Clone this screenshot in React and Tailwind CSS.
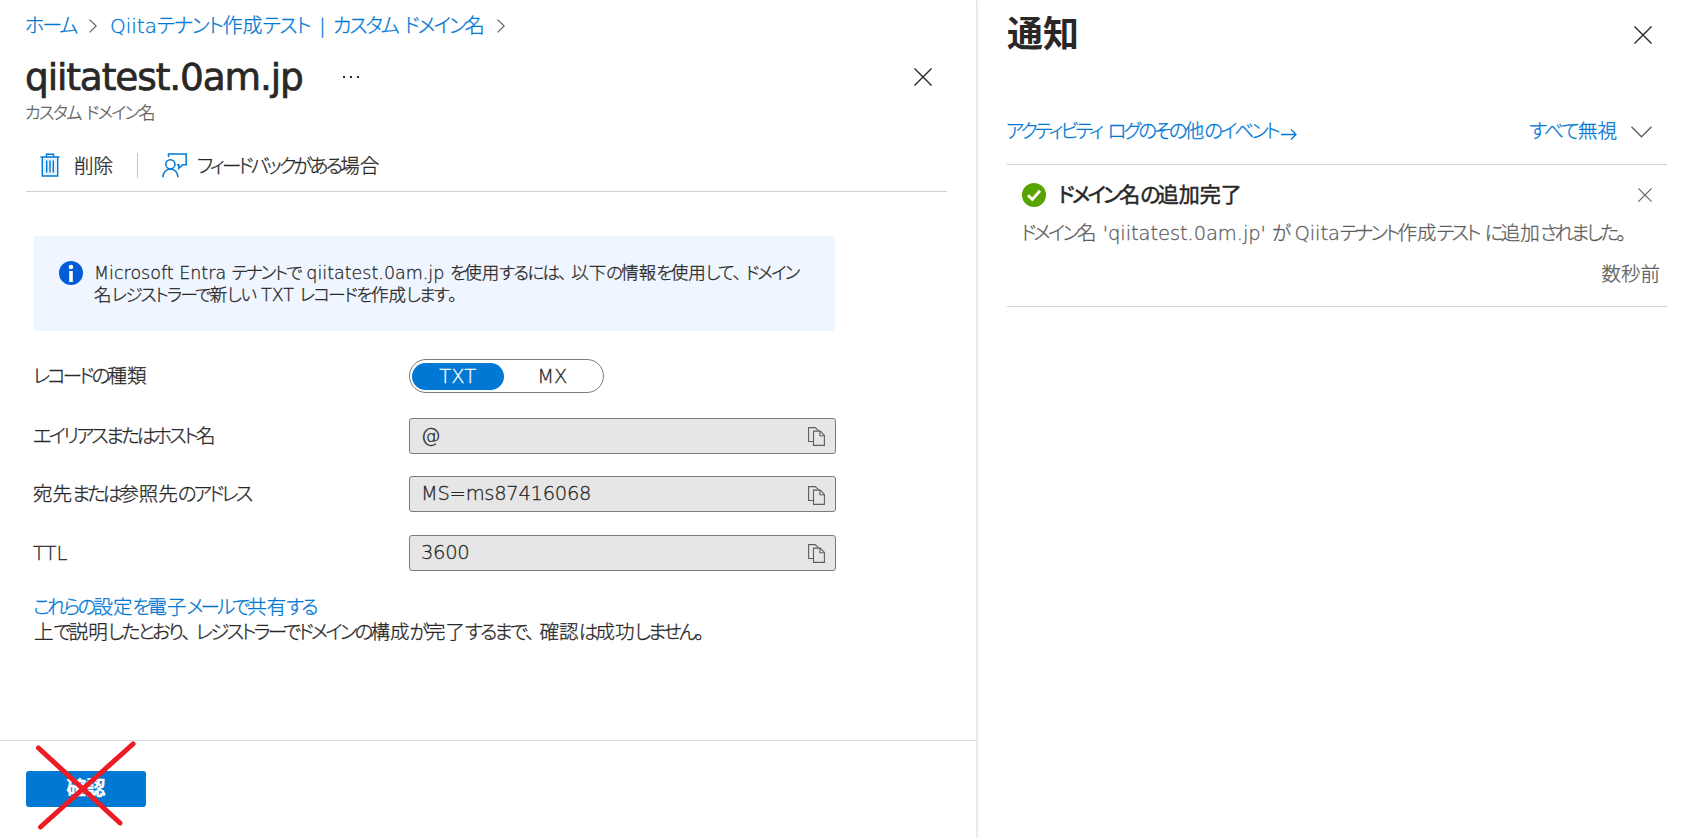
import React from 'react';

// Kana are set tighter than kanji, latin runs use a wide humanist face
const RUNS = /([\u3040-\u30ff]+|[\u0020-\u007e]+|\u3001)/;

function Jp({ children, className = '', kana = 'tracking-[-0.15em]', latin = '' }) {
  return (
    <span className={`whitespace-nowrap ${className}`}>
      {children.split(RUNS).filter(Boolean).map((run, i) => {
        if (/^[\u3040-\u30ff]/.test(run)) return <span key={i} className={kana}>{run}</span>;
        if (/^[\u0020-\u007e]/.test(run)) return <span key={i} className={latin}>{run}</span>;
        if (run === '、') return <span key={i} className="tracking-[0.24em]">{run}</span>;
        return run;
      })}
    </span>
  );
}

function Close({ size = 18, className = '' }) {
  return (
    <svg width={size} height={size} viewBox="0 0 18 18" fill="none" stroke="currentColor" strokeWidth="1.4" className={className}>
      <path d="M.5.5l17 17M17.5.5l-17 17" />
    </svg>
  );
}

function Crumb() {
  return (
    <svg width="8" height="14" viewBox="0 0 8 14" fill="none" stroke="#605e5c" strokeWidth="1.2">
      <path d="M.6.6L7.2 7 .6 13.4" />
    </svg>
  );
}

function Trash() {
  return (
    <svg width="20" height="24" viewBox="0 0 20 24" fill="none" stroke="#0078d4" strokeWidth="1.4">
      <path d="M2.300 4h15.400v19H2.300z" fill="#e3f1fb" stroke="none" />
      <path d="M.5 4h19M6.500 4V1.200h7V4M2.300 4v19h15.400V4" />
      <path d="M6.700 7.500v12M10 7.500v12M13.300 7.500v12" />
    </svg>
  );
}

function Feedback() {
  return (
    <svg width="25" height="25" viewBox="0 0 25 25" fill="none" stroke="#0078d4" strokeWidth="1.5">
      <path d="M6.500 4V1h17.700v10.700h-3.400l-4 3.600v-3.600h-2" />
      <circle cx="8.400" cy="11.300" r="4.600" />
      <path d="M.8 24.200c.3-4.800 3.400-8.300 7.600-8.300s7.300 3.500 7.600 8.300" />
    </svg>
  );
}

function Copy() {
  return (
    <svg width="17" height="19" viewBox="0 0 17 19" fill="none" stroke="#605e5c" strokeWidth="1.1" className="mt-[2px]">
      <path d="M5 14.500H.6V.6h6.600l3.300 3" />
      <path d="M5.500 4.100h6.800l4.100 4.300v10H5.500z" />
      <path d="M11.900 4.200v4.500h4.400" />
    </svg>
  );
}

function Row({ label, children }) {
  return (
    <div className="flex items-center h-9">
      <div className="w-[376px] -ml-px pt-[2px]"><Jp>{label}</Jp></div>
      {children}
    </div>
  );
}

function Field({ value }) {
  return (
    <div className="flex items-center justify-between w-[427px] h-9 pl-[11px] pr-[10px] bg-[#e6e6e6] border border-[#7d7b79] rounded-[3px]">
      <span className="tracking-[-0.015em]">{value}</span>
      <Copy />
    </div>
  );
}

export default function App() {
  return (
    <div lang="ja" className="flex w-[1684px] h-[838px] overflow-hidden bg-white text-[#292827] text-[19.5px] leading-6 font-light [-webkit-text-stroke:0.3px_currentColor] font-['DejaVu_Sans','Noto_Sans_CJK_JP',sans-serif] [font-feature-settings:'palt']">
      {/* Domain blade */}
      <main className="flex flex-col w-[977px] shrink-0 border-r border-[#e4e4e4] shadow-[0_0_4px_rgba(0,0,0,0.12)]">
        <nav className="flex items-center h-6 mt-[14px] pl-[25px] text-[20px] text-[#0078d4]">
          <Jp className="w-[64px]" kana="tracking-[-0.1em]">ホーム</Jp>
          <Crumb />
          <Jp className="w-[209px] ml-[13px]" kana="tracking-[-0.06em]">Qiitaテナント作成テスト</Jp>
          <span className="w-[14px]">|</span>
          <Jp className="w-[164px]" kana="tracking-[-0.1em]">カスタム ドメイン名</Jp>
          <Crumb />
        </nav>

        <header className="flex items-center h-12 mt-[15px] pl-[25px] pr-[44px]">
          <h1 className="w-[317px] text-[37.5px] font-normal tracking-[-0.03em] [-webkit-text-stroke:0.7px_#292827]">qiitatest.0am.jp</h1>
          <svg width="18" height="3" viewBox="0 0 18 3" fill="#292827">
            <path d="M1 0h2v2H1zM8 0h2v2H8zM15 0h2v2h-2z" />
          </svg>
          <Close className="ml-auto" />
        </header>
        <div className="h-6 pl-[25px] text-[17px] text-[#605e5c]"><Jp kana="tracking-[-0.09em]">カスタム ドメイン名</Jp></div>

        <div className="flex items-center h-[53px] mt-[14px] ml-[26px] mr-[29px] pl-[14px] border-b border-[#d2d0ce]">
          <Trash />
          <Jp className="w-[63px] ml-[14px] pt-[3px]">削除</Jp>
          <div className="w-px h-[25px] mr-[24px] bg-[#c8c6c4]" />
          <Feedback />
          <Jp className="ml-[10px] pt-[3px]">フィードバックがある場合</Jp>
        </div>

        <section className="pl-[34px]">
          <div className="flex w-[801px] h-[95px] mt-[44px] pl-[25px] pt-[25px] bg-[#eff6ff] rounded-[3px] text-[17.5px] leading-[22px]">
            <svg width="24" height="24" viewBox="0 0 24 24" className="shrink-0">
              <circle cx="12" cy="12" r="12" fill="#015cda" />
              <circle cx="12" cy="6" r="2.300" fill="#fff" />
              <path d="M10.200 10h3.600v11h-3.600z" fill="#fff" />
            </svg>
            <p className="ml-[11px] pt-px">
              <Jp kana="tracking-[-0.1em]">Microsoft Entra テナントで qiitatest.0am.jp を使用するには、以下の情報を使用して、ドメイン</Jp>
              <br />
              <Jp kana="tracking-[-0.09em]">名レジストラーで新しい TXT レコードを作成します。</Jp>
            </p>
          </div>

          <div className="flex flex-col gap-[22.500px] mt-[27px]">
            <Row label="レコードの種類">
              <div className="flex items-center w-[195px] h-[34px] px-[2px] border border-[#7d7b79] rounded-full">
                <span className="w-[93px] h-[27px] leading-[27px] rounded-full bg-[#0078d4] text-white text-center">TXT</span>
                <span className="w-[99px] pt-px text-center">MX</span>
              </div>
            </Row>
            <div className="flex flex-col gap-[22.500px] pt-px">
              <Row label="エイリアスまたはホスト名"><Field value="@" /></Row>
              <Row label="宛先または参照先のアドレス"><Field value="MS=ms87416068" /></Row>
              <Row label="TTL"><Field value="3600" /></Row>
            </div>
          </div>

          <div className="mt-[25px] h-[25px] -ml-px text-[#0078d4]"><Jp>これらの設定を電子メールで共有する</Jp></div>
          <div><Jp kana="tracking-[-0.14em]">上で説明したとおり、レジストラーでドメインの構成が完了するまで、確認は成功しません。</Jp></div>
        </section>

        <footer className="relative h-[98px] mt-auto pt-[30px] pl-[26px] border-t border-[#dddcdb]">
          <button className="block w-[120px] h-9 rounded-[3px] bg-[#0078d4] text-white font-bold leading-8">確認</button>
          <svg width="110" height="98" viewBox="0 0 110 98" className="absolute left-[30px] top-0" fill="none" stroke="#ed1c24" strokeWidth="5" strokeLinecap="round">
            <path d="M8.500 7L90 82M103 3L10.500 86" />
          </svg>
        </footer>
      </main>

      {/* Notifications */}
      <aside className="w-[690px] pl-[30px]">
        <div className="flex items-center justify-between h-12 mt-[11px] pr-[15px]">
          <h2 className="text-[36px] font-bold [-webkit-text-stroke:0]">通知</h2>
          <Close />
        </div>
        <div className="flex items-center h-[106px] pt-[41px] pr-[15px] border-b border-[#d2d0ce] text-[#0078d4]">
          <Jp className="-ml-px">アクティビティ ログのその他のイベント</Jp>
          <svg width="16" height="11" viewBox="0 0 16 11" fill="none" stroke="#0078d4" strokeWidth="1.300" className="mt-1 ml-[3px]">
            <path d="M0 5.500h15M10 .5l5 5-5 5" />
          </svg>
          <Jp className="ml-auto" kana="tracking-[-0.08em]">すべて無視</Jp>
          <svg width="21" height="12" viewBox="0 0 21 12" fill="none" stroke="#605e5c" strokeWidth="1.400" className="ml-[14px]">
            <path d="M.5.800l10 10 10-10" />
          </svg>
        </div>
        <article className="h-[142px] pt-[18px] pl-[15px] border-b border-[#d2d0ce]">
          <div className="flex items-center pr-[15px]">
            <svg width="24" height="24" viewBox="0 0 24 24">
              <circle cx="12" cy="12" r="12" fill="#57a300" />
              <path d="M6 12.200l4.300 4.300 7.700-8.700" fill="none" stroke="#fff" strokeWidth="2.800" />
            </svg>
            <Jp className="ml-[12px] text-[21px] font-normal [-webkit-text-stroke:0.5px_#292827]" kana="tracking-[-0.13em]">ドメイン名の追加完了</Jp>
            <Close size={14} className="ml-auto text-[#605e5c]" />
          </div>
          <div className="mt-[15px] -ml-px text-[#605e5c]"><Jp kana="tracking-[-0.14em]" latin="tracking-[-0.004em]">ドメイン名 'qiitatest.0am.jp' が Qiitaテナント作成テスト に追加されました。</Jp></div>
          <div className="mt-[17px] pr-[7px] text-right text-[#605e5c]">数秒前</div>
        </article>
      </aside>
    </div>
  );
}
